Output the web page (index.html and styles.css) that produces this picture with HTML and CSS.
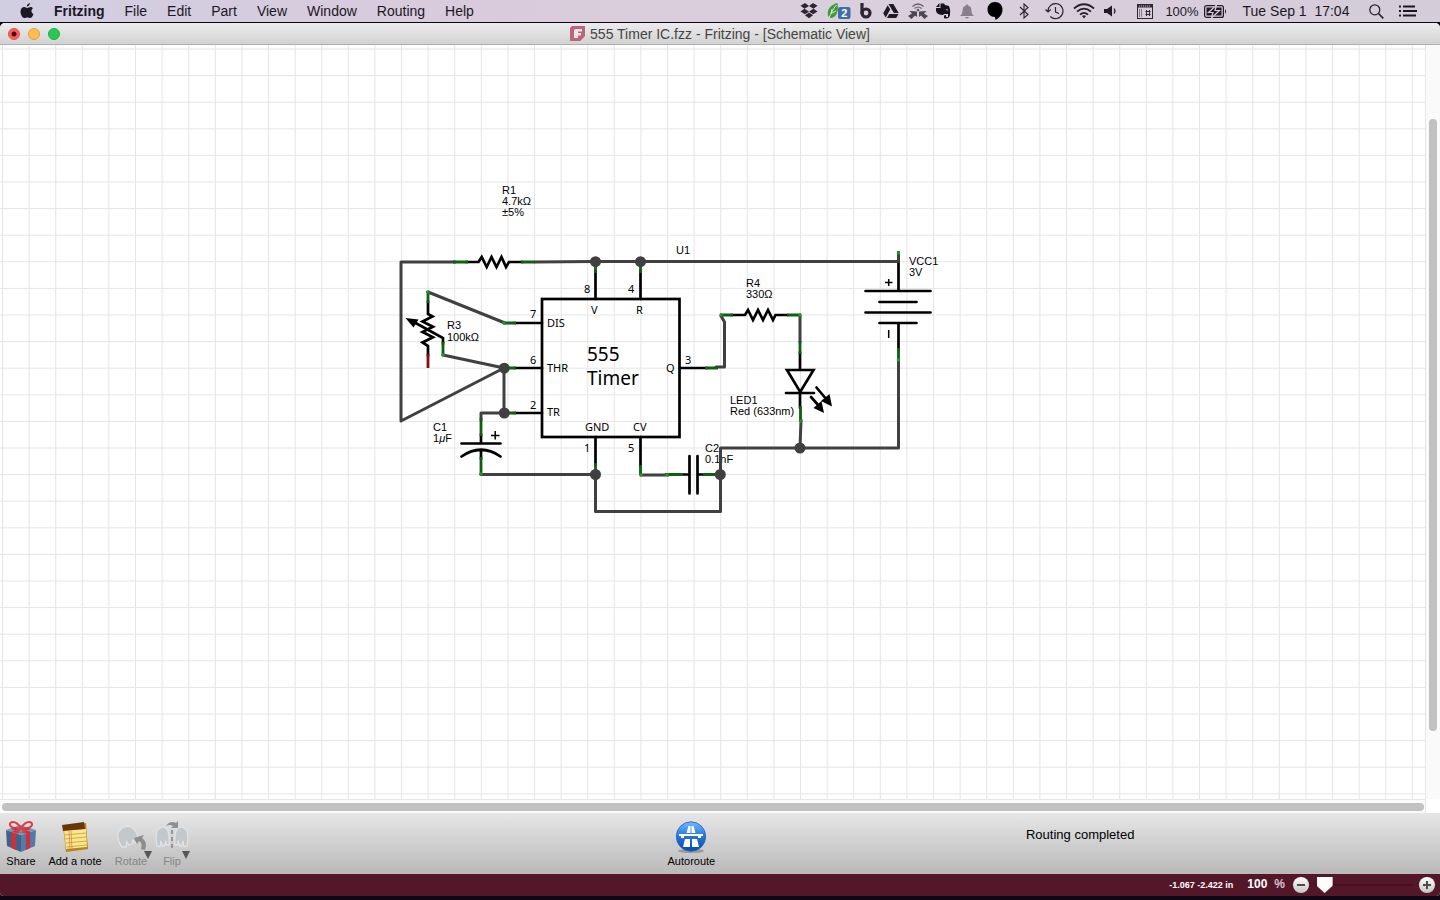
FILE: index.html
```html
<!DOCTYPE html>
<html lang="en">
<head>
<meta charset="utf-8">
<title>555 Timer IC.fzz - Fritzing - [Schematic View]</title>
<link rel="stylesheet" href="styles.css">
</head>
<body>
<header class="menubar">
  <nav class="menus" aria-label="Application menu">
    <button class="menu apple" aria-label="Apple menu"><svg width="14" height="16" viewBox="0 0 14 16"><path fill="#1c1724" d="M9.900 0C10 1.600 8.600 3.500 6.900 3.500C6.700 1.900 8.300.2 9.900 0ZM12.900 5.400C10.800 6.800 11 9.800 13.500 10.900C12.800 12.900 11.500 15.100 10 15.100C8.900 15.100 8.600 14.500 7.300 14.500C6 14.500 5.600 15.100 4.600 15.100C2.600 15.100.5 11.600.5 8.700C.5 5.800 2.300 4.100 4.200 4.100C5.500 4.100 6.300 4.900 7.300 4.900C8.200 4.900 9.100 4 10.600 4C11.500 4 12.400 4.500 12.900 5.400Z"/></svg></button>
    <button class="menu app">Fritzing</button>
    <button class="menu">File</button>
    <button class="menu">Edit</button>
    <button class="menu">Part</button>
    <button class="menu">View</button>
    <button class="menu">Window</button>
    <button class="menu">Routing</button>
    <button class="menu">Help</button>
  </nav>
  <div class="extras">
    <svg width="18" height="16" viewBox="0 0 18 16" fill="#2b2630"><path d="M5 0L9 3L4.500 5.700L.5 2.800ZM13 0L17.500 2.800L13.500 5.700L9 3ZM4.500 5.700L9 8.500L5 11.300L.5 8.500ZM13.500 5.700L17.500 8.500L13 11.300L9 8.500ZM9 9.400L13 12.300L9 15.200L5 12.300Z"/></svg>
    <svg width="24" height="18" viewBox="0 0 24 18"><path fill="#3f9a3c" d="M10.500 1C3 3 0 7 1 14L3 16C9 16 12 10 10.500 1Z"/><path d="M2 16C4 11 6 7 9.500 3M4 12L5 7M5 11L9 9" stroke="#d6efc8" fill="none"/><rect x="11" y="5" width="12.500" height="12" rx="2" fill="#416cab"/><text x="17.200" y="15" text-anchor="middle" class="badge">2</text></svg>
    <svg width="12" height="16" viewBox="0 0 12 16"><path d="M2 0V11" stroke="#2b2630" stroke-width="3.200"/><circle cx="6" cy="10" r="4" fill="none" stroke="#2b2630" stroke-width="3.200"/></svg>
    <svg width="16" height="14" viewBox="0 0 16 14" fill="#1f1a24"><path d="M5.500 0H10.400L15.700 9H10.900ZM4.700 1.200L7.200 5.500L2.700 13.500L.2 9.200ZM6.200 10H15.500L13.200 14H3.900Z"/></svg>
    <svg width="20" height="16" viewBox="0 0 20 16"><path d="M4.500 3.500Q10-1.500 15.500 3.500M6.500 5.500Q10 2.500 13.500 5.500" fill="none" stroke="#625c67" stroke-width="1.200"/><circle cx="10" cy="7" r="1.300" fill="#625c67"/><path fill="#4b4650" d="M1.500 8L9 8.500V14L7 12.500L3.500 16L0 13L4 10.500ZM18.500 8L11 8.500V14L13 12.500L16.500 16L20 13L16 10.500Z"/></svg>
    <svg width="16" height="17" viewBox="0 0 16 17" fill="#17121b"><path d="M4.500 0V4H1ZM5.500.5H9L10 2L14 3Q16 7 15 12Q14 16 10 15.500Q8.500 15 9 12.500L11 12V14H13V11H9L8 12Q2 12 1 8V5H5.500Z"/><path d="M10.500 7Q12 5.500 13.500 7.500Z" fill="#d8ccda"/></svg>
    <svg width="14" height="15" viewBox="0 0 14 15" fill="#87808b"><path d="M7 0L8.200 1.600Q11.300 2.600 11.300 6Q11.300 10 14 12H0Q2.700 10 2.700 6Q2.700 2.600 5.800 1.600ZM5 13H9Q7 16 5 13Z"/></svg>
    <svg width="16" height="18" viewBox="0 0 16 18"><path d="M8 0C3.500 0 .5 3.300.5 7.500S3.500 15 8 15L8.500 18C13 15.500 15.500 12 15.500 7.500S12.500 0 8 0Z"/></svg>
    <svg width="10" height="16" viewBox="0 0 10 16"><path d="M1 4L9 11.500L5 15V1L9 4.500L1 12" fill="none" stroke="#27212c" stroke-width="1.100"/></svg>
    <svg width="19" height="17" viewBox="0 0 19 17" fill="none" stroke="#2c2631" stroke-width="1.200"><path d="M3 8.500A7.500 7.500 0 1 1 5.300 13.500M.5 6.500L3 9L5.700 6.500M10.500 4V9L14 10.500"/></svg>
    <svg width="22" height="16" viewBox="0 0 22 16" fill="none" stroke="#251f2a" stroke-width="1.800"><path d="M1 5.500Q11-3 21 5.500M4 8.700Q11 2.500 18 8.700M7 11.700Q11 8 15 11.700"/><path d="M9 13Q11 11.500 13 13L11 15.500Z" fill="#251f2a" stroke="none"/></svg>
    <svg width="14" height="12" viewBox="0 0 14 12"><path fill="#211b26" d="M0 4H3L8 .5V11.500L3 8H0Z"/><path d="M10 3.500Q12 6 10 8.500" fill="none" stroke="#211b26" stroke-width="1.200"/></svg>
    <svg width="16" height="15" viewBox="0 0 16 15"><path fill="#2c2631" d="M0 0H16V15H0ZM1 3.500V14H15V3.500Z" fill-rule="evenodd"/><path stroke="#d6cbd8" stroke-dasharray="1 1" d="M2 2H14"/><path stroke="#2c2631" stroke-dasharray="1 1" d="M2 6H6M2 8H6M2 10H6M2 12H6"/><path d="M8.500 7.500H13.500M8.500 10.500H13.500M9.500 6V12M12.500 6V12" stroke="#2c2631"/></svg>
    <span class="charge">100%</span>
    <svg width="23" height="13" viewBox="0 0 23 13"><rect x=".6" y=".6" width="18.800" height="11.800" rx="2" fill="none" stroke="#211b26" stroke-width="1.200"/><rect x="2.500" y="2.500" width="15" height="8" fill="#211b26"/><path d="M12.500 0L4.500 7.500H9L7.500 13L15.500 5.500H11Z" fill="#211b26" stroke="#d8cdd8" stroke-width="1.200"/><path d="M21 4Q23 6.500 21 9Z" fill="#211b26"/></svg>
    <time class="clock">Tue Sep 1&nbsp; 17:04</time>
    <svg width="15" height="15" viewBox="0 0 15 15" fill="none" stroke="#2a242f"><circle cx="5.800" cy="5.800" r="5" stroke-width="1.300"/><path d="M9.500 9.500L14.300 14.300" stroke-width="1.700"/></svg>
    <svg width="18" height="12" viewBox="0 0 18 12"><path d="M0 1.500H2M4 1.500H16M0 6H2M4 6H18M0 10.500H2M4 10.500H17" stroke="#1c1621" stroke-width="1.800"/></svg>
  </div>
</header>

<main class="window">
  <div class="titlebar">
    <div class="lights">
      <button class="light close" aria-label="Close"></button>
      <button class="light minimise" aria-label="Minimise"></button>
      <button class="light zoom" aria-label="Zoom"></button>
    </div>
    <h1 class="title"><svg width="16" height="15" viewBox="0 0 16 15"><path fill="#b9677c" d="M2 0H15V10L10.500 15H0V2Z"/><path fill="#f3e3e8" d="M4 12V4.500Q4 3 6 3H12V5.500H8V7H11V9.500H8V12Z"/></svg>555 Timer IC.fzz - Fritzing - [Schematic View]</h1>
  </div>

  <div class="view">
    <svg class="sheet" role="img" aria-label="555 timer schematic">
      <defs>
        <pattern id="grid" x="2" y="48.500" width="26.600" height="26.600" patternUnits="userSpaceOnUse"><path d="M.5 0V26.600M0 .5H26.600" class="gridline"/></pattern>
      </defs>
      <g transform="translate(0 -45)">
        <rect y="45" width="100%" height="100%" fill="url(#grid)"/>
        <g class="label">
          <text x="502" y="194">R1</text><text x="502" y="205">4.7kΩ</text><text x="502" y="216">±5%</text>
          <text x="676" y="254">U1</text>
          <text x="447" y="329">R3</text><text x="447" y="341">100kΩ</text>
          <text x="433" y="431">C1</text><text x="433" y="442">1<tspan font-style="italic">μ</tspan>F</text>
          <text x="746" y="287">R4</text><text x="746" y="298">330Ω</text>
          <text x="909" y="265">VCC1</text><text x="909" y="276">3V</text>
          <text x="730" y="404">LED1</text><text x="730" y="415">Red (633nm)</text>
          <text x="705" y="452">C2</text><text x="705" y="463">0.1nF</text>
        </g>
        <g class="part">
          <rect x="542" y="299" width="137.500" height="138"/>
          <path d="M466 262H478.500L481.700 257L486.700 267L491.500 257L496.500 267L501.500 257L506 267L509 262H523"/>
          <path d="M595.500 271V299M640.500 271V299M514 323H542M514 368H542M514 413H542M595.500 437V465M640.500 437V467M680 368H707"/>
          <path d="M428 301V314L432.500 316.500L422.500 321.500L433 326.700L422.500 332L433 337.300L422.500 342.500L428 346V356"/>
          <path d="M412 321L443 338V344"/>
          <path d="M481 434V443.500M461.500 443.500H500.500M461.500 456.500Q481 443 500.500 456.500M481 450V459"/>
          <path d="M681 474.500H689M697.500 474.500H705M689.500 456V493.500M697.500 456V493.500"/>
          <path d="M731 315H745L748 310L753 320L758 310L763 320L768 310L773 320L775.500 315H788"/>
          <path d="M800 352V370M787 370H813.500L800.200 392ZM786 393H814M800 393V408M816.500 387.500L827 400M811 397L819 406"/>
          <path d="M898.500 262V291M865.500 291H930.500M879.500 302H916.500M865.500 312.500H930.500M879.500 323H916.500M898.500 323V350"/>
        </g>
        <path d="M405.500 318L418.500 319.500L413.500 327.500ZM832 406.500L829.500 394L821 401ZM824 413L821.500 401L813.500 408Z"/>
        <path class="sign" d="M491 435.500H499.500M495.200 431V439.500M885 282.500H892.500M888.700 279V286M888.700 330V338"/>
        <path class="wire" d="M455 262H401V421L504 368L443 355M428 292L505 323M504 368V413H481V420M481 474.500H595.500V511.500H720.500V448H898.500V360M535 262L595 261.500H898.500V255M641 475H668M721 316L724.500 322V367H716M800 316V342M801 420L800 448"/>
        <path class="lead" d="M453 262H468M521 262H535M595.500 261.500V273M640.500 261.500V273M428 291V303M503 323H516M443 342V355M504 368H516M504 413H516M481 418V436M481 457V475M595.500 463V475M640.500 465V475M665 474.500H683M703 474.500H720M705 368H718M720 315H733M787 315H801M800 341V354M800.500 406V422M898.500 251V255M898.500 348V362"/>
        <path class="lead loose" d="M428 354V368"/>
        <g class="tip"><circle cx="428" cy="292" r="1.800"/><circle cx="504" cy="323" r="1.800"/><circle cx="443" cy="355" r="1.800"/><circle cx="481" cy="474" r="1.800"/><circle cx="641" cy="475" r="1.800"/><circle cx="667" cy="475" r="1.800"/><circle cx="721" cy="315" r="1.800"/><circle cx="800" cy="315" r="1.800"/><circle cx="801" cy="421" r="1.800"/><circle cx="898.500" cy="360" r="1.800"/><circle cx="898.500" cy="253" r="1.800"/></g>
        <g class="node"><circle cx="595.500" cy="261.700" r="5.500"/><circle cx="640.500" cy="261.700" r="5.500"/><circle cx="504.300" cy="368.200" r="5.500"/><circle cx="504.300" cy="413" r="5.500"/><circle cx="595.500" cy="474.500" r="5.500"/><circle cx="720.300" cy="474.500" r="5.500"/><circle cx="800" cy="448" r="5.500"/></g>
        <g class="pin">
          <text x="584" y="293">8</text><text x="628" y="293">4</text><text x="530" y="318">7</text><text x="530" y="364">6</text><text x="530" y="409">2</text><text x="584" y="452">1</text><text x="628" y="452">5</text><text x="685" y="364">3</text>
          <text x="591" y="314">V</text><text x="636" y="314">R</text><text x="547" y="327">DIS</text><text x="547" y="372">THR</text><text x="547" y="416">TR</text><text x="585" y="431">GND</text><text x="633" y="431">CV</text><text x="666" y="372">Q</text>
        </g>
        <text class="chip"><tspan x="587" y="361">555</tspan> <tspan x="587" y="385">Timer</tspan></text>
      </g>
    </svg>
    <div class="vtrack"><div class="thumb"></div></div>
    <div class="htrack"><div class="thumb"></div></div>
    <div class="corner"></div>
  </div>

  <div class="toolbar">
    <div class="tools">
      <button class="tool share"><svg width="32" height="32" viewBox="0 0 32 32"><path fill="#426189" d="M1 9L16 14V31L2 25Z"/><path fill="#557aa4" d="M16 14L31 9L30 25L16 31Z"/><path fill="#7895b5" d="M1 9L15 4L31 9L16 14Z"/><path fill="#cb303b" d="M6 10.500L11 12V29L6.500 27ZM21 12L25 10.700V27L21 29ZM6 8L10 6L26 11L21 12.500ZM26 8L22 6L6 11L11 12.500Z"/><path d="M16 7C10-2 4 1 5 4S12 8 16 7C22-2 28 1 27 4S20 8 16 7L10 13M16 7L22 13" fill="none" stroke="#db3d47" stroke-width="2"/></svg>Share</button>
      <button class="tool note"><svg width="28" height="32" viewBox="0 0 28 32"><path fill="#b98119" d="M2 5L25 2L27 28L5 31Z"/><path fill="#fae68b" d="M3 9L25 8L26 26L5 28Z"/><path fill="#693705" d="M1 4L23 1L24 8L2 10Z"/><path d="M4 14L25 12M4 18L25 16M5 22L26 20M5 26L26 24" stroke="#cfae50"/><path d="M8 10L9 28M10 10L11 28" stroke="#d58c50" stroke-width=".8"/></svg>Add a note</button>
      <button class="tool rotate" disabled><svg width="34" height="32" viewBox="0 0 34 32"><path fill="#c3c8cd" stroke="#e2e3e5" stroke-width="1.300" d="M8 26Q3 20 4 12Q9 3 17 6Q24 10 24 20L21 22L19 19L18 23L15 24L13 21L12 26Z"/><path fill="#8b8c8d" d="M20 17L30 14L28 17Q34 21 31 29L27 28Q29 22 25 20L23 23Z"/></svg>Rotate<i class="arrow"></i></button>
      <button class="tool flip" disabled><svg width="34" height="32" viewBox="0 0 34 32"><g fill="#c3c8cd" stroke="#e2e3e5" stroke-width="1.300"><path id="hand" d="M2 25Q0 17 2 10Q6 4 11 7Q15 11 14 24H11V20L9 25H7L6 20L5 26Z"/><use href="#hand" transform="matrix(-1 0 0 1 34 0)"/></g><path d="M17 9V30" stroke="#8d8f90" stroke-width="1.800" stroke-dasharray="4 3"/><path fill="#8e8f90" d="M11 5Q15-1 21 2L23 0V7H16L18 5Q15 3 11 5Z"/></svg>Flip<i class="arrow"></i></button>
    </div>
    <button class="tool autoroute"><svg width="32" height="32" viewBox="0 0 32 32"><defs><linearGradient id="sky" x2="0" y2="1"><stop stop-color="#71b9ff"/><stop offset=".5" stop-color="#2575d5"/><stop offset="1" stop-color="#0a4aaf"/></linearGradient></defs><ellipse cx="16" cy="30" rx="13" ry="2" fill="#999"/><circle cx="16" cy="15.500" r="14.700" fill="url(#sky)" stroke="#1d62ba" stroke-width=".8"/><path fill="#fff" d="M13.500 5H15.500V12H11.500ZM16.500 5H18.500L20.500 12H16.500ZM4 13H28V15H26V17H23V15H9V17H6V15H4ZM10 18H15V26H8ZM17 18H22L24 26H17Z"/></svg>Autoroute</button>
    <output class="message">Routing completed</output>
  </div>

  <footer class="status">
    <span class="coords">-1.067 -2.422 in</span>
    <label class="scale"><input class="percent" type="text" value="100" aria-label="Zoom percent">%</label>
    <button class="step" aria-label="Zoom out"><svg width="16" height="16" viewBox="0 0 16 16"><path d="M4 8H12" stroke="#4c4c4c" stroke-width="2"/></svg></button>
    <input class="slider" type="range" min="0" max="100" value="2" aria-label="Zoom">
    <button class="step" aria-label="Zoom in"><svg width="16" height="16" viewBox="0 0 16 16"><path d="M4 8H12M8 4V12" stroke="#4c4c4c" stroke-width="2"/></svg></button>
  </footer>
</main>
</body>
</html>
```

FILE: styles.css
```css
* { box-sizing: border-box; }
body {
  margin: 0;
  height: 100vh;
  display: flex;
  flex-direction: column;
  overflow: hidden;
  background: #0e0714;
  color: #000;
  font-family: "Liberation Sans", Arial, sans-serif;
  padding-bottom: 4px;
}
button { border: 0; padding: 0; background: none; font: inherit; color: inherit; }
svg { display: block; flex: none; }

.menubar {
  display: flex;
  justify-content: space-between;
  height: 22px;
  flex: none;
  background: linear-gradient(90deg, #d1cee2, #d9cbdb 35%, #dacfdc 60%, #d5ccd9);
  color: #1c1724;
  font-size: 14px;
  padding: 0 16px 0 20px;
}
.menus { display: flex; align-items: center; }
.menu { padding: 0 10px; line-height: 22px; }
.apple { padding-left: 0; }
.app { font-weight: bold; }
.extras {
  display: grid;
  grid-template-columns: 30px 30px 24px 26px 28px 22px 26px 30px 28px 32px 28px 26px 42px 32px 34px 128px 32px 32px;
  place-items: center;
  white-space: nowrap;
}
.badge { font: bold 11px "Liberation Sans", sans-serif; fill: #fff; }
.charge { font-size: 13px; }
.clock { font-size: 14px; }

.window {
  flex: 1;
  min-height: 0;
  display: flex;
  flex-direction: column;
  margin-top: 1px;
  border-radius: 5px 5px 4px 4px;
  overflow: hidden;
  background: #fff;
}
.titlebar {
  display: grid;
  grid-template-columns: 1fr auto 1fr;
  align-items: center;
  height: 22px;
  flex: none;
  background: linear-gradient(#ececec, #d2d2d2);
  border-bottom: 1px solid #b0b0b0;
}
.lights { display: flex; gap: 8px; padding-left: 8px; }
.light { width: 12px; height: 12px; border-radius: 50%; border: 1px solid; }
.close { background: radial-gradient(circle, #4b0509 2px, #fa5f5c 3px); border-color: #de4b48; }
.minimise { background: #fdbe51; border-color: #dfa23a; }
.zoom { background: #27c953; border-color: #1fae42; }
.title { display: flex; gap: 4px; align-items: center; margin: 0; font-size: 14px; font-weight: normal; line-height: 20px; color: #444; white-space: nowrap; }

.view {
  flex: 1;
  min-height: 0;
  display: grid;
  grid-template: minmax(0, 1fr) 14px / minmax(0, 1fr) 15px;
}
.sheet { width: 100%; height: 100%; background: #fff; }
.vtrack {
  display: grid;
  grid-template-rows: 74fr 612fr 68fr;
  padding: 0 3px;
  background: #fafafa;
  border-left: 1px solid #e6e6e6;
}
.vtrack .thumb { grid-row: 2; }
.htrack { padding: 3px 1px 2px 2px; background: #fafafa; border-top: 1px solid #e6e6e6; display: grid; }
.thumb { background: #c1c1c1; border-radius: 4px; }
.corner { background: #fff; border-left: 1px solid #e6e6e6; }

.gridline { fill: none; stroke: #000; stroke-opacity: .1; }
.label { font-size: 11px; }
.part { fill: none; stroke: #000; stroke-width: 2.7; stroke-linecap: round; }
.sign { fill: none; stroke: #000; stroke-width: 1.5; }
.wire { fill: none; stroke: #404040; stroke-width: 3; stroke-linejoin: round; stroke-linecap: round; }
.lead { fill: none; stroke: #0d5f12; stroke-width: 2.8; }
.loose { stroke: #8a0a0e; }
.tip { fill: #2c8f30; }
.node { fill: #404040; }
.pin, .chip { font-family: "Noto Sans", sans-serif; }
.pin { font-size: 11px; }
.chip { font-size: 19px; }

.toolbar {
  display: grid;
  grid-template-columns: 46% 58px 1fr;
  height: 61px;
  flex: none;
  background: linear-gradient(#e6e6e6, #b9b9b9);
  font-size: 11px;
}
.tools { display: flex; }
.tool {
  position: relative;
  display: flex;
  flex-direction: column;
  align-items: center;
  gap: 2px;
  padding-top: 8px;
  line-height: 13px;
  white-space: nowrap;
}
.share { width: 42px; }
.note { width: 66px; }
.rotate { width: 46px; }
.flip { width: 36px; }
.tool:disabled { color: #858585; }
.arrow {
  position: absolute;
  right: 2px;
  top: 38px;
  border: 4px solid transparent;
  border-top: 8px solid #555;
  border-bottom: 0;
}
.flip .arrow { right: 0; }
.message { text-align: center; font-size: 13px; line-height: 15px; padding-top: 14px; }

.status {
  display: flex;
  justify-content: flex-end;
  align-items: center;
  height: 22px;
  flex: none;
  padding: 0 5px;
  background: #541729;
  color: #fff;
}
.coords { font-size: 9px; font-weight: bold; margin-right: 14px; line-height: 20px; }
.scale { display: flex; align-items: center; gap: 4px; font-size: 12px; line-height: 18px; margin: 0 8px 3px 0; font-weight: bold; color: #d9c6cd; }
.percent { width: 23px; border: 0; padding: 0; background: none; color: #fff; font: inherit; }
.step { width: 16px; height: 16px; border-radius: 50%; background: linear-gradient(#fff, #c4c4c4); }
.slider { appearance: none; width: 98px; height: 18px; margin: 0 6px; background: linear-gradient(#471022, #471022) center / 100% 2px no-repeat; }
.slider::-webkit-slider-thumb { appearance: none; width: 16px; height: 16px; background: #fff; clip-path: polygon(0 0, 100% 0, 100% 55%, 50% 100%, 0 55%); }
```
